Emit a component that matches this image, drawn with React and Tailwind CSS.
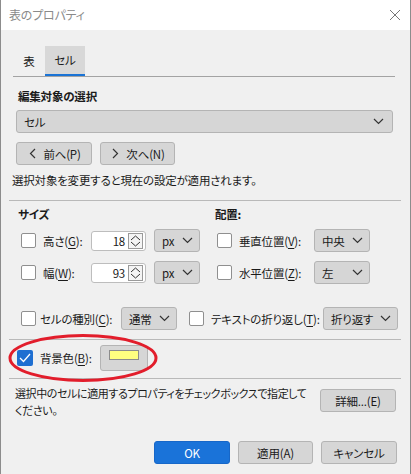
import React from "react";

function Chevron({ className = "" }) {
  return (
    <svg width="11" height="7" viewBox="0 0 11 7" className={className}>
      <polyline points="1,1 5.5,5.5 10,1" fill="none" stroke="#333" strokeWidth="1.2" />
    </svg>
  );
}

function Check({ checked }) {
  if (checked) {
    return (
      <span className="flex h-[16px] w-[16px] shrink-0 items-center justify-center rounded-[2px] bg-[#1f6fd1]">
        <svg width="12" height="10" viewBox="0 0 12 10">
          <polyline points="1,5 4.5,8.5 11,1" fill="none" stroke="white" strokeWidth="1.3" />
        </svg>
      </span>
    );
  }
  return <span className="block h-[15px] w-[15px] shrink-0 rounded-[2px] border border-[#8f8f8f] bg-white" />;
}

function Select({ label, className = "" }) {
  return (
    <div
      className={
        "flex h-[23px] shrink-0 items-center justify-between rounded-[3px] border border-[#b4b4b4] bg-[#d6d6d6] pl-[7px] pr-[6px] " +
        className
      }
    >
      <span className="whitespace-nowrap">{label}</span>
      <Chevron />
    </div>
  );
}

function Btn({ children, className = "" }) {
  return (
    <div
      className={
        "flex h-[23px] shrink-0 items-center justify-center whitespace-nowrap rounded-[3px] border border-[#b4b4b4] bg-[#d6d6d6] " +
        className
      }
    >
      {children}
    </div>
  );
}

function Num({ value }) {
  return (
    <div className="flex h-[20px] w-[55px] shrink-0 items-center justify-end rounded-[3px] border border-[#bdbdbd] bg-white pr-[2px]">
      <span className="mr-[3px]">{value}</span>
      <span className="flex h-[16px] w-[15px] items-center justify-center border border-[#9a9a9a] bg-[#f4f4f4]">
        <svg width="11" height="12" viewBox="0 0 11 12">
          <polyline points="1,5 5.5,1 10,5" fill="none" stroke="#333" strokeWidth="1" />
          <polyline points="1,7 5.5,11 10,7" fill="none" stroke="#333" strokeWidth="1" />
        </svg>
      </span>
    </div>
  );
}

function U({ children }) {
  return <span className="underline underline-offset-2">{children}</span>;
}

function Rule() {
  return <div className="ml-[8px] mr-[9px] h-px bg-[#b9b9b9]" />;
}

export default function App() {
  return (
    <div className="relative h-[474px] w-[411px] overflow-hidden border-x border-[#8c8c8c] bg-[#f0f0f0] font-['Noto_Sans_CJK_JP',sans-serif] text-[11.5px] leading-[16px] tracking-[-0.2px] text-[#1b1b1b] [font-feature-settings:'palt']">
      {/* title bar */}
      <div className="flex h-[30px] items-center justify-between bg-white pl-[8px] pr-[9px]">
        <span className="text-[12px] text-[#8a8a8a]">表のプロパティ</span>
        <svg width="12" height="12" viewBox="0 0 12 12">
          <path d="M1 1 L11 11 M11 1 L1 11" stroke="#777" strokeWidth="1" />
        </svg>
      </div>

      {/* tabs */}
      <div className="ml-[12px] mt-[16px] flex h-[31px] w-[382px] border-b border-[#a3a3a3]">
        <div className="flex h-[30px] w-[32px] items-center justify-center">表</div>
        <div className="flex h-[30px] w-[40px] items-center justify-center border-b-2 border-[#1a73d5] bg-[#d8d8d8]">
          セル
        </div>
      </div>

      <div className="ml-[17px] mt-[11px] font-bold">編集対象の選択</div>
      <Select label="セル" className="ml-[15px] mt-[6px] w-[377px] pr-[8px]" />

      <div className="ml-[15px] mt-[9px] flex gap-[8px]">
        <Btn className="w-[76px] gap-[5px]">
          <Chevron className="rotate-90" />
          <span>前へ(P)</span>
        </Btn>
        <Btn className="w-[75px] gap-[5px]">
          <Chevron className="-rotate-90" />
          <span>次へ(N)</span>
        </Btn>
      </div>

      <div className="ml-[11px] mt-[7px]">選択対象を変更すると現在の設定が適用されます。</div>

      <div className="mt-[12px]">
        <Rule />
      </div>

      <div className="ml-[17px] mt-[5px] flex font-bold">
        <span className="w-[197px]">サイズ</span>
        <span>配置:</span>
      </div>

      <div className="ml-[20px] mt-[7px] grid grid-cols-[196px_1fr] gap-y-[9px]">
        <div className="flex h-[23px] items-center">
          <Check />
          <span className="ml-[7px] w-[48px] whitespace-nowrap">
            高さ(<U>G</U>):
          </span>
          <Num value="18" />
          <Select label="px" className="ml-[8px] w-[46px]" />
        </div>
        <div className="flex h-[23px] items-center">
          <Check />
          <span className="ml-[7px] w-[75px] whitespace-nowrap">
            垂直位置(<U>V</U>):
          </span>
          <Select label="中央" className="w-[56px]" />
        </div>
        <div className="flex h-[23px] items-center">
          <Check />
          <span className="ml-[7px] w-[48px] whitespace-nowrap">
            幅(<U>W</U>):
          </span>
          <Num value="93" />
          <Select label="px" className="ml-[8px] w-[46px]" />
        </div>
        <div className="flex h-[23px] items-center">
          <Check />
          <span className="ml-[7px] w-[75px] whitespace-nowrap">
            水平位置(<U>Z</U>):
          </span>
          <Select label="左" className="w-[56px]" />
        </div>
      </div>

      <div className="ml-[20px] mt-[23px] flex h-[23px] items-center">
        <Check />
        <span className="ml-[4px] w-[81px] whitespace-nowrap">
          セルの種別(<U>C</U>):
        </span>
        <Select label="通常" className="w-[56px]" />
        <span className="ml-[12px]">
          <Check />
        </span>
        <span className="ml-[7px] w-[112px] whitespace-nowrap">
          テキストの折り返し(<U>T</U>):
        </span>
        <Select label="折り返す" className="w-[75px]" />
      </div>

      <div className="mt-[9px]">
        <Rule />
      </div>

      <div className="ml-[16px] mt-[5px] flex h-[26px] items-center">
        <Check checked />
        <span className="ml-[7px] w-[60px] whitespace-nowrap">
          背景色(<U>B</U>):
        </span>
        <div className="flex h-[26px] w-[48px] justify-center rounded-[3px] border border-[#b4b4b4] bg-[#d6d6d6] pt-[4px]">
          <div className="h-[10px] w-[30px] border border-[#8c8c8c] bg-[#ffff80]" />
        </div>
      </div>

      <div className="mt-[7px]">
        <Rule />
      </div>

      <div className="ml-[14px] mt-[6px] flex items-start">
        <div className="w-[296px] whitespace-nowrap text-[11px] leading-[17px] tracking-[-0.4px]">
          選択中のセルに適用するプロパティをチェックボックスで指定して
          <br />
          ください。
        </div>
        <Btn className="ml-[9px] mt-[4px] w-[76px]">詳細...(E)</Btn>
      </div>

      <div className="mr-[13px] mt-[22px] flex justify-end gap-[8px]">
        <div className="flex h-[23px] w-[76px] items-center justify-center rounded-[3px] border border-[#1767c8] bg-[#1a73d9] text-white">
          OK
        </div>
        <Btn className="w-[75px]">適用(A)</Btn>
        <Btn className="w-[76px]">キャンセル</Btn>
      </div>

      {/* red ellipse highlight */}
      <svg className="absolute left-[6px] top-[333px]" width="154" height="50" viewBox="0 0 154 50">
        <ellipse cx="76" cy="25" rx="73" ry="22.5" fill="none" stroke="#e21d2b" strokeWidth="3" />
      </svg>
    </div>
  );
}
